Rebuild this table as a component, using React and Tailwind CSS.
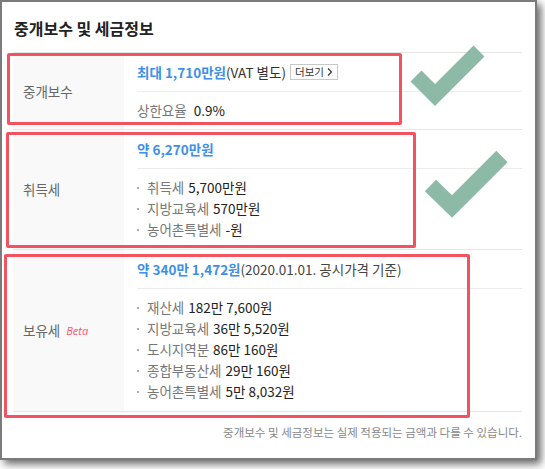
import React from "react";

function Item({ label, value }) {
  return (
    <div className="flex items-center h-[21px]">
      <span className="w-[2px] h-[2px] bg-[#aaaaaa] mr-[8px]" />
      <span className="text-[#777777]">{label}</span>
      <span className="ml-[4px] text-[#222222]">{value}</span>
    </div>
  );
}

export default function App() {
  return (
    <div className="relative w-[545px] h-[469px] bg-white overflow-hidden font-['Noto_Sans_CJK_KR','Noto_Sans',sans-serif]">
      <div className="w-[537px] h-[460px] border-2 border-[#7b7b7b] bg-white shadow-[4px_4px_8px_rgba(0,0,0,0.6)] pl-[11px] pr-[13px]">
        <div className="h-[50px] flex items-center pl-[1px] pt-[1px] text-[16px] font-bold text-[#222222] leading-none">
          중개보수 및 세금정보
        </div>
        <div className="border-t border-[#e6e6e6] text-[13.5px] leading-[21px]">
          {/* Row 1 */}
          <div className="flex border-b border-[#e6e6e6]">
            <div className="w-[111px] bg-[#f9f9f9] flex items-center pl-[10px] text-[#666666]">
              중개보수
            </div>
            <div className="flex-1 pl-[13px]">
              <div className="h-[39px] flex items-center border-b border-[#ececec]">
                <span className="text-[#3d8fe8] font-bold">최대 1,710만원</span>
                <span className="text-[#333333]">(VAT 별도)</span>
                <span className="ml-[4px] h-[16px] px-[4px] border border-[#c8c8c8] flex items-center text-[10.5px] leading-none text-[#333333]">
                  더보기
                  <svg width="6" height="8" viewBox="0 0 6 8" className="ml-[3px]">
                    <path d="M1 0.5 L4.5 4 L1 7.5" fill="none" stroke="#333" strokeWidth="1.2" />
                  </svg>
                </span>
              </div>
              <div className="h-[37px] flex items-center">
                <span className="text-[#777777]">상한요율</span>
                <span className="ml-[7px] text-[#222222]">0.9%</span>
              </div>
            </div>
          </div>
          {/* Row 2 */}
          <div className="flex border-b border-[#e6e6e6]">
            <div className="w-[111px] bg-[#f9f9f9] flex items-center pl-[10px] text-[#666666]">
              취득세
            </div>
            <div className="flex-1 pl-[13px]">
              <div className="h-[39px] flex items-center border-b border-[#ececec]">
                <span className="text-[#3d8fe8] font-bold">약 6,270만원</span>
              </div>
              <div className="pt-[8px] pb-[9px]">
                <Item label="취득세" value="5,700만원" />
                <Item label="지방교육세" value="570만원" />
                <Item label="농어촌특별세" value="-원" />
              </div>
            </div>
          </div>
          {/* Row 3 */}
          <div className="flex border-b border-[#e6e6e6]">
            <div className="w-[111px] bg-[#f9f9f9] flex items-center pl-[10px] text-[#666666]">
              보유세
              <span className="ml-[6px] text-[11px] italic text-[#f5566a] font-['Open_Sans',sans-serif]">Beta</span>
            </div>
            <div className="flex-1 pl-[13px]">
              <div className="h-[39px] flex items-center border-b border-[#ececec]">
                <span className="text-[#3d8fe8] font-bold">약 340만 1,472원</span>
                <span className="text-[#444444]">(2020.01.01. 공시가격 기준)</span>
              </div>
              <div className="pt-[8px] pb-[9px]">
                <Item label="재산세" value="182만 7,600원" />
                <Item label="지방교육세" value="36만 5,520원" />
                <Item label="도시지역분" value="86만 160원" />
                <Item label="종합부동산세" value="29만 160원" />
                <Item label="농어촌특별세" value="5만 8,032원" />
              </div>
            </div>
          </div>
        </div>
        <div className="mt-[12px] text-right text-[11.5px] leading-[16px] text-[#888888]">
          중개보수 및 세금정보는 실제 적용되는 금액과 다를 수 있습니다.
        </div>
      </div>

      {/* annotation boxes */}
      <div className="absolute left-[7px] top-[53px] w-[395px] h-[72px] border-[3px] border-[#f2535f] rounded-[2px] pointer-events-none" />
      <div className="absolute left-[6px] top-[132px] w-[410px] h-[116px] border-[3px] border-[#f2535f] rounded-[2px] pointer-events-none" />
      <div className="absolute left-[4px] top-[254px] w-[466px] h-[164px] border-[3px] border-[#f2535f] rounded-[2px] pointer-events-none" />

      {/* check marks */}
      <svg className="absolute left-0 top-0 pointer-events-none" width="545" height="469" viewBox="0 0 545 469">
        <polyline points="416,76 435,95 479,51" fill="none" stroke="#8dbaa7" strokeWidth="15.5" strokeLinejoin="miter" strokeLinecap="butt" />
        <polyline points="430.5,185.5 452,206.5 502,156.5" fill="none" stroke="#8dbaa7" strokeWidth="16" strokeLinejoin="miter" strokeLinecap="butt" />
      </svg>
    </div>
  );
}
